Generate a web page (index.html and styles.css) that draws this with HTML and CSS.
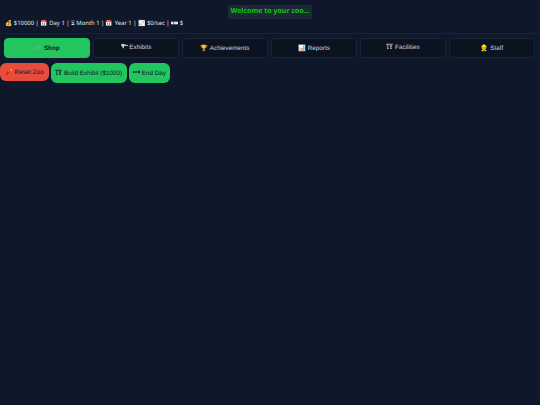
FILE: index.html
```html
<!DOCTYPE html>
<html lang="en">
<head>
    <meta charset="UTF-8">
    <meta name="viewport" content="width=device-width, initial-scale=1.0">
    <title>Zoo Tycoon</title>
    <link rel="stylesheet" href="styles.css">
</head>
<body>
    <div class="header">
        <div class="welcome">Welcome to your zoo...</div>
        <div class="stats">💰 $10000 | 📅 Day 1 | ⏳︎ Month 1 | 📅 Year 1 | 📈 $0/sec |
            <svg class="icon" viewBox="0 0 8 6"><path d="M0 1.5h8v3H0z" fill="currentColor"/><path d="M3 1.5v3" stroke="#0f172a" stroke-width=".6"/></svg> $</div>
    </div>

    <div class="tabs">
        <button class="tab active">🛒 Shop</button>
        <button class="tab raised">
            <svg class="icon" viewBox="0 0 8 6"><path d="M0 1.2 2 .4l1.5.7L8 2.2v1.2L6.6 2.8 3.6 3 3 5.6H1.8L1.6 3.4.6 3.2z" fill="currentColor"/></svg> Exhibits</button>
        <button class="tab">🏆 Achievements</button>
        <button class="tab">📊 Reports</button>
        <button class="tab raised">
            <svg class="icon" viewBox="0 0 8 6"><path d="M.2 1h7.6M2 1v4.8M1 5.8h2M5.6 2v3.8M4.4 3h2.6M4.8 5.8h1.8" stroke="currentColor" stroke-width=".9" fill="none"/></svg> Facilities</button>
        <button class="tab">👷 Staff</button>
    </div>

    <div class="actions">
        <button class="action reset">🧨 Reset Zoo</button>
        <button class="action">
            <svg class="icon" viewBox="0 0 8 6"><path d="M.2 1h7.6M2 1v4.8M1 5.8h2M5.6 2v3.8M4.4 3h2.6M4.8 5.8h1.8" stroke="currentColor" stroke-width=".9" fill="none"/></svg> Build Exhibit ($1000)</button>
        <button class="action">
            <svg class="icon" viewBox="0 0 8 6"><path d="M0 1.6 2.4 3 0 4.4zM2.8 1.6 5.2 3 2.8 4.4zM5.8 1.6H8v2.8H5.8z" fill="currentColor"/></svg> End Day</button>
    </div>
</body>
</html>
```

FILE: styles.css
```css
body {
    font-family: "Liberation Sans", Arial, sans-serif;
    background-color: #0f172a;
    color: #e2e8f0;
    margin: 0;
    min-height: 405px;
    text-rendering: geometricPrecision;
}
.header {
    padding: 5px 5px 5px;
    border-bottom: 1px solid #1a2234;
}
.welcome {
    width: 84px;
    height: 14px;
    margin: 0 auto;
    background-color: #1b2a36;
    color: #16c60c;
    font-family: "Noto Sans", sans-serif;
    font-size: 7px;
    line-height: 14px;
    font-weight: bold;
    text-align: center;
}
.stats {
    font-family: "Noto Sans", sans-serif;
    font-size: 5.9px;
    line-height: 9px;
}
.icon {
    width: 7px;
    height: 6px;
    vertical-align: -0.5px;
}
.tabs {
    display: grid;
    grid-template-columns: repeat(6, 1fr);
    gap: 3px;
    padding: 4px 5px 5px 4px;
}
.tab {
    height: 20px;
    padding: 0;
    background-color: #0b1220;
    color: #cbd5e1;
    border: 1px solid #1a2538;
    border-radius: 4px;
    font-family: inherit;
    font-size: 6.3px;
    text-rendering: geometricPrecision;
}
.tab.raised {
    padding-bottom: 2px;
}
.tab.active {
    background-color: #22c55e;
    border-color: #22c55e;
    color: #0f172a;
    font-weight: bold;
}
.actions {
    display: flex;
    align-items: flex-start;
    gap: 2px;
}
.action {
    height: 20px;
    padding: 0 4.5px;
    background-color: #22c55e;
    color: #0f172a;
    border: none;
    border-radius: 6px;
    font-family: inherit;
    font-size: 6.3px;
    text-rendering: geometricPrecision;
}
.action.reset {
    height: 18px;
    padding: 0 5px;
    background-color: #e74c3c;
}
```
